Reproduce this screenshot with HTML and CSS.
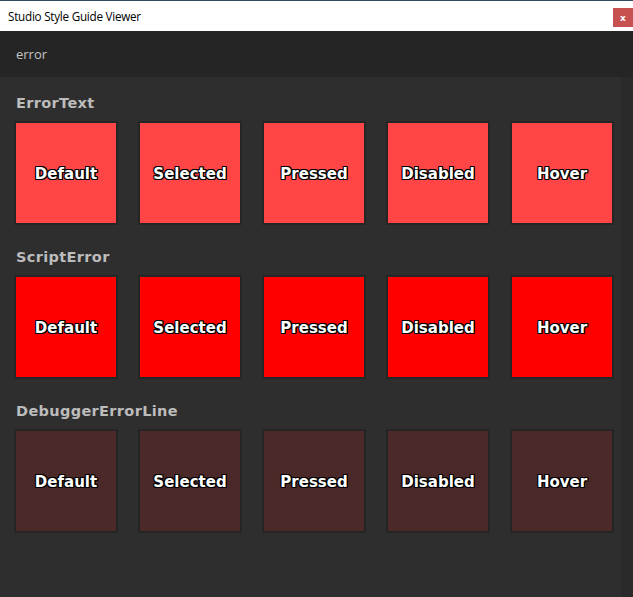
FILE: index.html
```html
<!DOCTYPE html>
<html>
<head>
<meta charset="utf-8">
<link rel="stylesheet" href="styles.css">
</head>
<body>
<div class="titlebar">
  <span class="title">Studio Style Guide Viewer</span>
  <span class="close">x</span>
</div>
<div class="searchbar">error</div>
<div class="main">
  <div class="content">
    <section class="group">
      <h2 class="heading">ErrorText</h2>
      <div class="row">
        <div class="swatch c-errortext"><span class="label">Default</span></div>
        <div class="swatch c-errortext"><span class="label">Selected</span></div>
        <div class="swatch c-errortext"><span class="label">Pressed</span></div>
        <div class="swatch c-errortext"><span class="label">Disabled</span></div>
        <div class="swatch c-errortext"><span class="label">Hover</span></div>
      </div>
    </section>
    <section class="group">
      <h2 class="heading">ScriptError</h2>
      <div class="row">
        <div class="swatch c-scripterror"><span class="label">Default</span></div>
        <div class="swatch c-scripterror"><span class="label">Selected</span></div>
        <div class="swatch c-scripterror"><span class="label">Pressed</span></div>
        <div class="swatch c-scripterror"><span class="label">Disabled</span></div>
        <div class="swatch c-scripterror"><span class="label">Hover</span></div>
      </div>
    </section>
    <section class="group">
      <h2 class="heading">DebuggerErrorLine</h2>
      <div class="row">
        <div class="swatch c-debugger"><span class="label">Default</span></div>
        <div class="swatch c-debugger"><span class="label">Selected</span></div>
        <div class="swatch c-debugger"><span class="label">Pressed</span></div>
        <div class="swatch c-debugger"><span class="label">Disabled</span></div>
        <div class="swatch c-debugger"><span class="label">Hover</span></div>
      </div>
    </section>
  </div>
  <div class="scrollbar"></div>
</div>
</body>
</html>
```

FILE: styles.css
```css
* { box-sizing: border-box; }
html, body {
  margin: 0;
  padding: 0;
}
body {
  width: 633px;
  height: 597px;
  overflow: hidden;
  background: #2e2e2e;
  font-family: "Open Sans", "Noto Sans", sans-serif;
  display: flex;
  flex-direction: column;
}
.titlebar {
  height: 31px;
  border-top: 1px solid #2f4b5c;
  background: #ffffff;
  display: flex;
  align-items: flex-start;
  padding-left: 8px;
}
.title {
  font-family: "Open Sans", "Noto Sans", sans-serif;
  font-size: 11.7px;
  color: #000;
  line-height: 30px;
  letter-spacing: -0.25px;
}
.close {
  margin-left: auto;
  margin-top: 7px;
  width: 20px;
  height: 19px;
  background: #c75050;
  color: #fff;
  font-family: "DejaVu Sans", sans-serif;
  font-weight: bold;
  font-size: 9px;
  display: flex;
  align-items: center;
  justify-content: center;
}
.searchbar {
  height: 46px;
  background: #252525;
  color: #c4c4c4;
  font-size: 13px;
  padding-left: 16px;
  display: flex;
  align-items: center;
}
.main {
  flex: 1;
  display: flex;
}
.content {
  flex: 1;
  padding: 15px 0 0 14px;
  display: flex;
  flex-direction: column;
  gap: 21px;
}
.scrollbar {
  width: 12px;
  background: #2a2a2a;
}
.heading {
  margin: 0 0 9px 2px;
  height: 20px;
  line-height: 22px;
  font-family: "DejaVu Sans", sans-serif;
  font-weight: bold;
  font-size: 14.5px;
  letter-spacing: 0.35px;
  color: #bcbcbc;
}
.row {
  display: flex;
  gap: 20px;
}
.swatch {
  width: 104px;
  height: 104px;
  border: 2px solid #252525;
  display: flex;
  align-items: center;
  justify-content: center;
}
.c-errortext { background: #ff4545; }
.c-scripterror { background: #ff0000; }
.c-debugger { background: #4b2929; }
.label {
  margin-top: 2px;
  font-family: "DejaVu Sans", sans-serif;
  font-weight: bold;
  font-size: 15px;
  color: #fff;
  text-shadow:
    1px 0 0 #000, -1px 0 0 #000, 0 1px 0 #000, 0 -1px 0 #000,
    1px 1px 0 #000, -1px -1px 0 #000, 1px -1px 0 #000, -1px 1px 0 #000;
}
```
